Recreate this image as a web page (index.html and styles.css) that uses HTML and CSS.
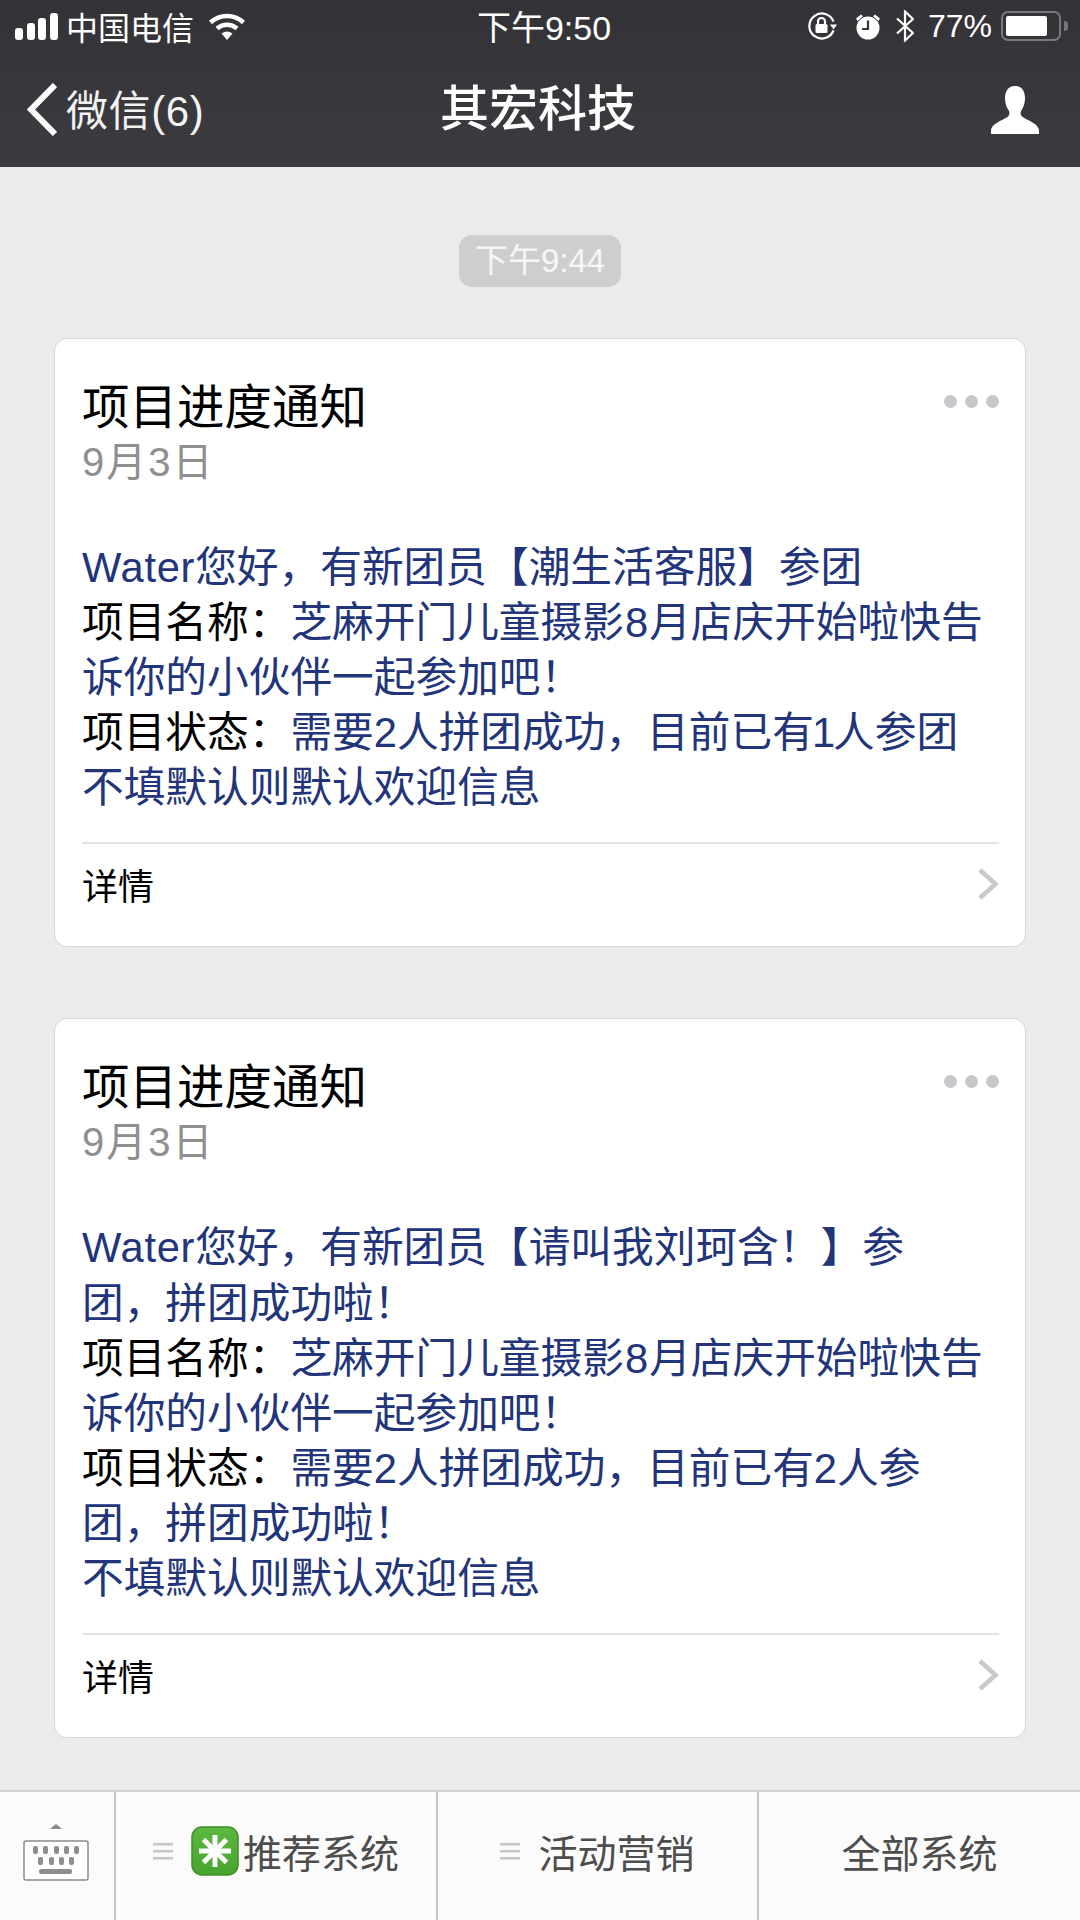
FILE: index.html
```html
<!DOCTYPE html>
<html lang="zh-CN">

<head>
    <meta charset="UTF-8">
    <meta name="viewport" content="width=device-width, initial-scale=1.0">
    <title>其宏科技</title>
    <link rel="stylesheet" href="styles.css">
</head>

<body>
    <div id="container">
        <div id="header">
            <div id="status">
                <div class="status-left">
                    <svg class="signal" viewBox="0 0 43 27">
                        <rect x="0" y="15" width="8" height="12" rx="3" fill="#fff"/>
                        <rect x="12" y="10" width="8" height="17" rx="3" fill="#fff"/>
                        <rect x="23" y="5" width="8" height="22" rx="3" fill="#fff"/>
                        <rect x="35" y="0" width="8" height="27" rx="3" fill="#fff"/>
                    </svg>
                    <span class="carrier">中国电信</span>
                    <svg class="wifi" viewBox="0 0 36 27" fill="none" stroke="#fff">
                        <path d="M1.5 9.5C11 .8 25 .8 34.500 9.500" stroke-width="4.500"/>
                        <path d="M8 15.500C14 10.500 22 10.500 28 15.500" stroke-width="4.500"/>
                        <path d="M12.500 20.500Q18 16.500 23.500 20.500L18 27Z" fill="#fff" stroke="none"/>
                    </svg>
                </div>
                <span class="clock">下午9:50</span>
                <div class="status-right">
                    <svg class="lock" viewBox="0 0 30 28" fill="none" stroke="#fff" stroke-width="2.200">
                        <path d="M25.500 9.500A12.500 12.500 0 1 0 25.500 18.500"/>
                        <path d="M22 12.500h7l-3.500 5z" fill="#fff" stroke="none"/>
                        <path d="M10 12V9.500a3.500 3.500 0 0 1 7 0V12"/>
                        <rect x="7.500" y="12" width="12" height="9" rx="1.500" fill="#fff" stroke="none"/>
                    </svg>
                    <svg class="alarm" viewBox="0 0 24 27">
                        <circle cx="12" cy="15" r="11.500" fill="#fff"/>
                        <path d="M12 7.500V16H6" fill="none" stroke="#36363a" stroke-width="2.200"/>
                        <path d="M0 5.500L5 1.500 7 3.200 1.500 8zM24 5.500L19 1.500 17 3.200 22.500 8z" fill="#fff"/>
                    </svg>
                    <svg class="bluetooth" viewBox="0 0 18 32" fill="none" stroke="#fff" stroke-width="2.200">
                        <path d="M1 8.500L17 23 9 30.500V1.500L17 9 1 23.500"/>
                    </svg>
                    <span class="percent">77%</span>
                    <div class="battery">
                        <div class="battery-fill"></div>
                    </div>
                    <div class="battery-nub"></div>
                </div>
            </div>
            <div id="nav">
                <div class="back">
                    <svg class="back-arrow" viewBox="0 0 30 53" fill="none" stroke="#fff" stroke-width="6">
                        <path d="M28 2L4 26.500 28 51"/>
                    </svg>
                    <span class="back-text">微信(6)</span>
                </div>
                <div class="nav-title">其宏科技</div>
                <svg class="person" viewBox="0 0 48 48">
                    <path d="M24 0C16.500 0 14 6 14 12.500c0 4.500 1.500 9 4 12.500 1 2.500 0 5-1.500 6C11 34.500 0 38 0 44.500V48h48v-3.500C48 38 37 34.500 31.500 31c-1.500-1-2.500-3.500-1.500-6 2.500-3.500 4-8 4-12.500C34 6 31.500 0 24 0z" fill="#fff"/>
                </svg>
            </div>
        </div>

        <div id="chat">
            <div class="time-pill">下午9:44</div>

            <div class="card">
                <div class="card-head">
                    <div class="card-title">项目进度通知</div>
                    <div class="dots"><i></i><i></i><i></i></div>
                </div>
                <div class="card-date">9月3日</div>
                <div class="card-body">
                    <span class="blue"><span class="latin">Water</span>您好&#xFF0C;有新团员【潮生活客服】参团</span><br>
                    项目名称&#xFF1A;<span class="blue">芝麻开门儿童摄影<span class="num-eight">8</span>月店庆开始啦快告</span><br>
                    <span class="blue">诉你的小伙伴一起参加吧&#xFF01;</span><br>
                    项目状态&#xFF1A;<span class="blue">需要2人拼团成功&#xFF0C;目前已有<span class="num-one">1</span>人参团</span><br>
                    <span class="blue">不填默认则默认欢迎信息</span>
                </div>
                <div class="card-foot">
                    <span>详情</span>
                    <svg class="chevron" viewBox="0 0 22 32" fill="none" stroke="#c8c8cd" stroke-width="4.500">
                        <path d="M3 2L18.500 16 3 30"/>
                    </svg>
                </div>
            </div>

            <div class="card">
                <div class="card-head">
                    <div class="card-title">项目进度通知</div>
                    <div class="dots"><i></i><i></i><i></i></div>
                </div>
                <div class="card-date">9月3日</div>
                <div class="card-body">
                    <span class="blue"><span class="latin">Water</span>您好&#xFF0C;有新团员【请叫我刘珂含&#xFF01;】参</span><br>
                    <span class="blue">团&#xFF0C;拼团成功啦&#xFF01;</span><br>
                    项目名称&#xFF1A;<span class="blue">芝麻开门儿童摄影<span class="num-eight">8</span>月店庆开始啦快告</span><br>
                    <span class="blue">诉你的小伙伴一起参加吧&#xFF01;</span><br>
                    项目状态&#xFF1A;<span class="blue">需要2人拼团成功&#xFF0C;目前已有2人参</span><br>
                    <span class="blue">团&#xFF0C;拼团成功啦&#xFF01;</span><br>
                    <span class="blue">不填默认则默认欢迎信息</span>
                </div>
                <div class="card-foot">
                    <span>详情</span>
                    <svg class="chevron" viewBox="0 0 22 32" fill="none" stroke="#c8c8cd" stroke-width="4.500">
                        <path d="M3 2L18.500 16 3 30"/>
                    </svg>
                </div>
            </div>
        </div>

        <div id="tabs">
            <div class="tab tab-keyboard">
                <svg class="keyboard" viewBox="0 0 66 60">
                    <path d="M27 8L33 3 39 8z" fill="#86868a"/>
                    <rect x="1" y="20" width="64" height="39" rx="2" fill="#fff" stroke="#8a8a8e" stroke-width="1.500"/>
                    <g fill="#8e8e92">
                        <rect x="10" y="25" width="5" height="8" rx="2"/>
                        <rect x="20" y="25" width="5" height="8" rx="2"/>
                        <rect x="31" y="25" width="5" height="8" rx="2"/>
                        <rect x="41" y="25" width="5" height="8" rx="2"/>
                        <rect x="51" y="25" width="5" height="8" rx="2"/>
                        <rect x="15" y="36" width="5" height="8" rx="2"/>
                        <rect x="26" y="36" width="5" height="8" rx="2"/>
                        <rect x="36" y="36" width="5" height="8" rx="2"/>
                        <rect x="46" y="36" width="5" height="8" rx="2"/>
                        <rect x="16" y="48" width="33" height="5" rx="2"/>
                    </g>
                </svg>
            </div>
            <div class="tab">
                <svg class="menu" viewBox="0 0 20 17" fill="#c6c6c6">
                    <rect width="20" height="2.500"/>
                    <rect y="7" width="20" height="2.500"/>
                    <rect y="14" width="20" height="2.500"/>
                </svg>
                <svg class="emoji" viewBox="0 0 48 50">
                    <defs>
                        <linearGradient id="emojiGreen" x1="0" y1="0" x2="0" y2="1">
                            <stop offset="0" stop-color="#5cb83f"/>
                            <stop offset="1" stop-color="#46a32e"/>
                        </linearGradient>
                    </defs>
                    <rect x="1" y="1" width="46" height="48" rx="10" fill="url(#emojiGreen)" stroke="#3f8f2a" stroke-width="1.500"/>
                    <g stroke="#fff" stroke-width="5">
                        <path d="M24 9V41"/>
                        <path d="M8 25H40"/>
                        <path d="M12.500 13.500L35.500 36.500"/>
                        <path d="M35.500 13.500L12.500 36.500"/>
                    </g>
                </svg>
                <span class="tab-text">推荐系统</span>
            </div>
            <div class="tab">
                <svg class="menu" viewBox="0 0 20 17" fill="#c6c6c6">
                    <rect width="20" height="2.500"/>
                    <rect y="7" width="20" height="2.500"/>
                    <rect y="14" width="20" height="2.500"/>
                </svg>
                <span class="tab-text">活动营销</span>
            </div>
            <div class="tab">
                <span class="tab-text">全部系统</span>
            </div>
        </div>
    </div>
</body>

</html>
```

FILE: styles.css
```css
* {
    margin: 0;
    padding: 0;
    box-sizing: border-box;
}

body {
    font-family: "Liberation Sans", "Noto Sans CJK SC", sans-serif;
    background: #ebebeb;
}

#container {
    display: flex;
    flex-direction: column;
    width: 1080px;
    height: 1920px;
    overflow: hidden;
}

/* header */
#header {
    flex: none;
    height: 167px;
    background: linear-gradient(#333337, #3b3b40);
    color: #fff;
}

#status {
    display: grid;
    grid-template-columns: 1fr auto 1fr;
    align-items: center;
    height: 54px;
    padding: 0 12px 2px 15px;
}

.status-left,
.status-right {
    display: flex;
    align-items: center;
}

.status-right {
    justify-content: flex-end;
}

.signal {
    width: 43px;
    height: 27px;
    margin-right: 8px;
}

.carrier {
    font-size: 32px;
    margin-right: 15px;
}

.wifi {
    width: 36px;
    height: 27px;
}

.clock {
    margin-bottom: 2px;
    margin-left: 5px;
    font-size: 34px;
}

.lock {
    width: 30px;
    height: 28px;
    margin-right: 18px;
}

.alarm {
    width: 24px;
    height: 27px;
    margin-right: 16px;
}

.bluetooth {
    width: 18px;
    height: 32px;
    margin-right: 14px;
}

.percent {
    font-size: 32px;
    margin-right: 9px;
}

.battery {
    width: 60px;
    height: 30px;
    padding: 3px;
    border: 2px solid #7a7a7e;
    border-radius: 7px;
}

.battery-fill {
    width: 41px;
    height: 100%;
    background: #fff;
    border-radius: 2px;
}

.battery-nub {
    width: 4px;
    height: 10px;
    margin-left: 3px;
    background: #77777b;
    border-radius: 0 4px 4px 0;
}

#nav {
    display: grid;
    grid-template-columns: 1fr auto 1fr;
    align-items: center;
    height: 113px;
    padding: 0 41px 2px 27px;
}

.back {
    display: flex;
    align-items: center;
    font-size: 42px;
    letter-spacing: 0.600px;
    color: #f2f2f2;
}

.back-arrow {
    width: 30px;
    height: 53px;
    margin-right: 9px;
}

.back-text {
    margin-bottom: 4px;
}

.nav-title {
    margin-bottom: 10px;
    margin-left: 10px;
    font-size: 49px;
    font-weight: 500;
}

.person {
    justify-self: end;
    width: 48px;
    height: 48px;
}

/* messages */
#chat {
    flex: 1;
    min-height: 0;
    display: flex;
    flex-direction: column;
    align-items: center;
    padding-top: 68px;
}

.time-pill {
    width: 162px;
    height: 52px;
    margin-bottom: 51px;
    background: #cecece;
    border-radius: 13px;
    color: #f6f6f6;
    font-size: 33px;
    line-height: 52px;
    text-align: center;
}

.card {
    width: 972px;
    margin-bottom: 71px;
    padding: 0 26px 0 27px;
    background: #fff;
    border: 1px solid #d8d8d8;
    border-radius: 13px;
}

.card:last-child {
    margin-bottom: 0;
}

.card-head {
    display: flex;
    justify-content: space-between;
    align-items: center;
    padding-top: 41px;
}

.card-title {
    font-size: 47.500px;
    line-height: 55px;
    color: #000;
}

.dots {
    display: flex;
    gap: 8px;
    margin-bottom: 12px;
}

.dots i {
    width: 13px;
    height: 13px;
    background: #c6c6cb;
    border-radius: 50%;
}

.card-date {
    font-size: 40px;
    line-height: 55px;
    letter-spacing: 2px;
    color: #8f8f8f;
}

.card-body {
    padding: 50px 0 27px;
    border-bottom: 2px solid #e3e3e3;
    font-size: 41.700px;
    line-height: 55.100px;
    white-space: nowrap;
    color: #000;
}

.blue {
    color: #22357a;
}

.latin {
    letter-spacing: 0.700px;
}

.num-eight {
    margin: 0 1px;
}

.num-one {
    margin: 0 -2px;
}

.card-foot {
    display: flex;
    justify-content: space-between;
    align-items: center;
    height: 102px;
    padding-bottom: 22px;
    font-size: 36px;
    color: #000;
}

.chevron {
    width: 22px;
    height: 32px;
}

/* bottom menu */
#tabs {
    flex: none;
    display: grid;
    grid-template-columns: 116px 322px 321px 321px;
    height: 130px;
    background: #fbfbfb;
    border-top: 2px solid #d2d2d2;
}

.tab {
    display: flex;
    justify-content: center;
    align-items: center;
    padding-bottom: 10px;
    border-right: 2px solid #c6c6c6;
}

.tab:last-child {
    border-right: 0;
}

.keyboard {
    width: 66px;
    height: 60px;
    margin-right: 2px;
}

.menu {
    width: 20px;
    height: 17px;
    margin-right: 18px;
}

.emoji {
    width: 48px;
    height: 50px;
    margin-right: 4px;
}

.tab-text {
    font-size: 39px;
    color: #4d4d4d;
}
```
